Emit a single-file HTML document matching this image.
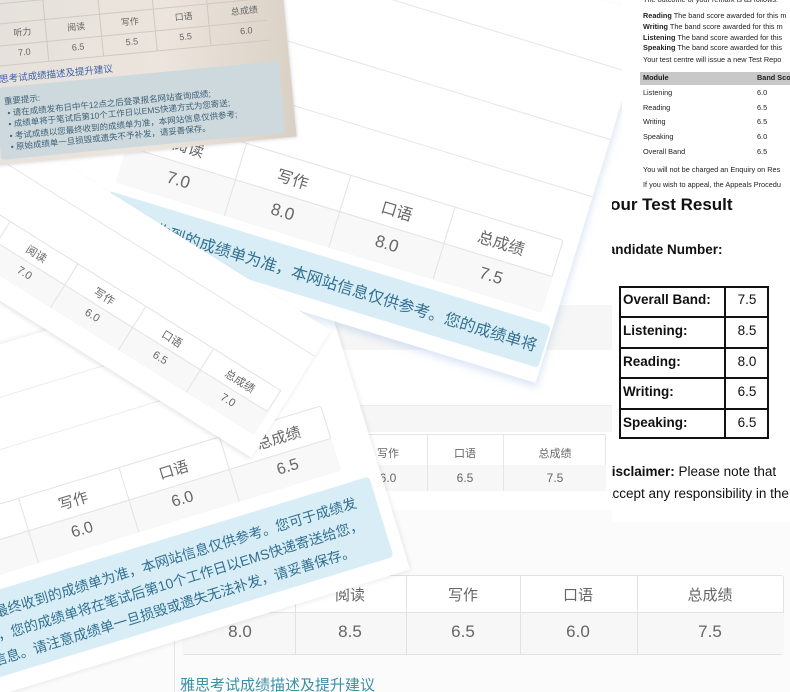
<!DOCTYPE html>
<html><head><meta charset="utf-8"><style>
*{margin:0;padding:0;box-sizing:border-box}
html,body{width:790px;height:692px;overflow:hidden}
body{background:#fff;font-family:"Liberation Sans","Noto Sans CJK SC",sans-serif;color:#666}
#w{position:relative;width:790px;height:692px;overflow:hidden}
.abs{position:absolute}
.rot{position:absolute;transform-origin:0 0}
.c{position:absolute;text-align:center;white-space:nowrap}
.banner{position:absolute;background:#d9edf7;color:#31708f;border-radius:4px}
</style></head><body><div id="w">

<!-- bottom flat card -->
<div class="abs" style="left:0;top:505px;width:790px;height:187px;background:#fbfbfb"></div>
<div class="abs" style="left:174px;top:520px;width:1px;height:172px;background:#e6e6e6"></div>
<div class="abs" style="left:182px;top:575px;width:602px;height:80px;background:#fff;border:1px solid #e2e2e2;border-radius:3px"></div>
<div class="abs" style="left:182px;top:612px;width:602px;height:42px;background:#f7f7f7;border-top:1px solid #e2e2e2"></div>
<div class="abs" style="left:295px;top:575px;width:1px;height:80px;background:#e2e2e2"></div>
<div class="abs" style="left:406px;top:575px;width:1px;height:80px;background:#e2e2e2"></div>
<div class="abs" style="left:520px;top:575px;width:1px;height:80px;background:#e2e2e2"></div>
<div class="abs" style="left:637px;top:575px;width:1px;height:80px;background:#e2e2e2"></div>
<div class="c" style="left:330px;top:584px;width:40px;font-size:15px;color:#666">阅读</div>
<div class="c" style="left:443px;top:584px;width:40px;font-size:15px">写作</div>
<div class="c" style="left:558px;top:584px;width:40px;font-size:15px">口语</div>
<div class="c" style="left:680px;top:584px;width:60px;font-size:15px">总成绩</div>
<div class="c" style="left:220px;top:622px;width:40px;font-size:17px">8.0</div>
<div class="c" style="left:330px;top:622px;width:40px;font-size:17px">8.5</div>
<div class="c" style="left:443px;top:622px;width:40px;font-size:17px">6.5</div>
<div class="c" style="left:558px;top:622px;width:40px;font-size:17px">6.0</div>
<div class="c" style="left:690px;top:622px;width:40px;font-size:17px">7.5</div>
<div class="abs" style="left:180px;top:674px;font-size:15px;color:#3b8fa6;white-space:nowrap">雅思考试成绩描述及提升建议</div>

<!-- middle flat card -->
<div class="abs" style="left:300px;top:300px;width:312px;height:210px;background:#fff"></div>
<div class="abs" style="left:300px;top:305px;width:312px;height:45px;background:#f6f6f6"></div>
<div class="abs" style="left:300px;top:405px;width:312px;height:27px;background:#f6f6f6;border-top:1px solid #ececec"></div>
<div class="abs" style="left:330px;top:434px;width:276px;height:57px;background:#fff;border:1px solid #e6e6e6"></div>
<div class="abs" style="left:330px;top:465px;width:276px;height:26px;background:#f7f7f7"></div>
<div class="abs" style="left:427px;top:434px;width:1px;height:57px;background:#e6e6e6"></div>
<div class="abs" style="left:503px;top:434px;width:1px;height:57px;background:#e6e6e6"></div>
<div class="c" style="left:370px;top:445px;width:36px;font-size:11px">写作</div>
<div class="c" style="left:447px;top:445px;width:36px;font-size:11px">口语</div>
<div class="c" style="left:530px;top:445px;width:50px;font-size:11px">总成绩</div>
<div class="c" style="left:370px;top:471px;width:36px;font-size:12px">6.0</div>
<div class="c" style="left:447px;top:471px;width:36px;font-size:12px">6.5</div>
<div class="c" style="left:537px;top:471px;width:36px;font-size:12px">7.5</div>

<!-- card C (rotated -17) -->
<div class="rot" style="left:73px;top:500px;transform:rotate(-17deg)">
  <div class="abs" style="left:-520px;top:-170px;width:822px;height:335px;background:#fff;box-shadow:0 0 6px rgba(0,0,0,.12)"></div>
  <div class="abs" style="left:-520px;top:-120px;width:780px;height:1px;background:#ececec"></div>
  <div class="abs" style="left:-520px;top:-70px;width:780px;height:1px;background:#ececec"></div>
  <div class="abs" style="left:-260px;top:-18px;width:525px;height:68px;background:#fff;border:1px solid #e3e3e3;border-radius:3px"></div>
  <div class="abs" style="left:-260px;top:16px;width:525px;height:34px;background:#f8f8f8;border-top:1px solid #e3e3e3"></div>
  <div class="abs" style="left:-52px;top:-18px;width:1px;height:68px;background:#e3e3e3"></div>
  <div class="abs" style="left:53px;top:-18px;width:1px;height:68px;background:#e3e3e3"></div>
  <div class="abs" style="left:158px;top:-18px;width:1px;height:68px;background:#e3e3e3"></div>
  <div class="c" style="left:-25px;top:-10px;width:50px;font-size:15px">写作</div>
  <div class="c" style="left:80px;top:-10px;width:50px;font-size:15px">口语</div>
  <div class="c" style="left:180px;top:-10px;width:70px;font-size:15px">总成绩</div>
  <div class="c" style="left:-25px;top:23px;width:50px;font-size:16px">6.0</div>
  <div class="c" style="left:80px;top:23px;width:50px;font-size:16px">6.0</div>
  <div class="c" style="left:190px;top:23px;width:50px;font-size:16px">6.5</div>
  <div class="banner" style="left:-400px;top:64px;width:690px;height:84px"></div>
  <div class="abs" style="left:-420px;top:74px;width:690px;font-size:14px;line-height:23px;color:#31708f;display:flex;flex-direction:column;align-items:flex-end;white-space:nowrap">
    <div>以您最终收到的成绩单为准，本网站信息仅供参考。您可于成绩发</div>
    <div>布成绩，您的成绩单将在笔试后第10个工作日以EMS快递寄送给您，</div>
    <div>考试信息。请注意成绩单一旦损毁或遗失无法补发，请妥善保存。&nbsp;&nbsp;&nbsp;&nbsp;</div>
  </div>
</div>

<!-- card A (rotated 17) -->
<div class="rot" style="left:293px;top:178px;transform:rotate(17deg)">
  <div class="abs" style="left:-420px;top:-260px;width:712px;height:385px;background:#fff;box-shadow:2px 4px 8px rgba(150,180,230,.35)"></div>
  <div class="abs" style="left:-420px;top:-200px;width:712px;height:1px;background:#e6e6e6"></div>
  <div class="abs" style="left:-420px;top:-130px;width:712px;height:1px;background:#e6e6e6"></div>
  <div class="abs" style="left:-420px;top:-70px;width:712px;height:1px;background:#e6e6e6"></div>
  <div class="abs" style="left:-168px;top:-20px;width:445px;height:76px;background:#fff;border:1px solid #e3e3e3;border-radius:3px"></div>
  <div class="abs" style="left:-168px;top:18px;width:445px;height:38px;background:#f8f8f8;border-top:1px solid #e3e3e3"></div>
  <div class="abs" style="left:-55px;top:-20px;width:1px;height:76px;background:#e3e3e3"></div>
  <div class="abs" style="left:54px;top:-20px;width:1px;height:76px;background:#e3e3e3"></div>
  <div class="abs" style="left:163px;top:-20px;width:1px;height:76px;background:#e3e3e3"></div>
  <div class="c" style="left:-134px;top:-12px;width:50px;font-size:16px">阅读</div>
  <div class="c" style="left:-25px;top:-12px;width:50px;font-size:16px">写作</div>
  <div class="c" style="left:84px;top:-12px;width:50px;font-size:16px">口语</div>
  <div class="c" style="left:183px;top:-12px;width:70px;font-size:16px">总成绩</div>
  <div class="c" style="left:-134px;top:26px;width:50px;font-size:17px">7.0</div>
  <div class="c" style="left:-25px;top:26px;width:50px;font-size:17px">8.0</div>
  <div class="c" style="left:84px;top:26px;width:50px;font-size:17px">8.0</div>
  <div class="c" style="left:193px;top:26px;width:50px;font-size:17px">7.5</div>
  <div class="banner" style="left:-170px;top:66px;width:460px;height:44px;border-radius:0 4px 4px 0"></div>
  <div class="abs" style="left:-170px;top:76px;width:452px;font-size:16px;color:#31708f;display:flex;justify-content:flex-end;white-space:nowrap;overflow:hidden"><span>以您最终收到的成绩单为准，本网站信息仅供参考。您的成绩单将</span></div>
</div>

<!-- card B (rotated 32) -->
<div class="rot" style="left:37px;top:253px;transform:rotate(32deg)">
  <div class="abs" style="left:-300px;top:-90px;width:590px;height:150px;background:#fff;box-shadow:0 2px 5px rgba(0,0,0,.1)"></div>
  <div class="abs" style="left:-300px;top:-60px;width:590px;height:1px;background:#e6e6e6"></div>
  <div class="abs" style="left:-120px;top:-13px;width:400px;height:52px;background:#fff;border:1px solid #e3e3e3"></div>
  <div class="abs" style="left:-120px;top:12px;width:400px;height:27px;background:#f8f8f8;border-top:1px solid #e3e3e3"></div>
  <div class="abs" style="left:-40px;top:-13px;width:1px;height:52px;background:#e3e3e3"></div>
  <div class="abs" style="left:40px;top:-13px;width:1px;height:52px;background:#e3e3e3"></div>
  <div class="abs" style="left:120px;top:-13px;width:1px;height:52px;background:#e3e3e3"></div>
  <div class="abs" style="left:200px;top:-13px;width:1px;height:52px;background:#e3e3e3"></div>
  <div class="c" style="left:-20px;top:-7px;width:40px;font-size:11px">阅读</div>
  <div class="c" style="left:60px;top:-7px;width:40px;font-size:11px">写作</div>
  <div class="c" style="left:140px;top:-7px;width:40px;font-size:11px">口语</div>
  <div class="c" style="left:215px;top:-7px;width:50px;font-size:11px">总成绩</div>
  <div class="c" style="left:-20px;top:18px;width:40px;font-size:11px">7.0</div>
  <div class="c" style="left:60px;top:18px;width:40px;font-size:11px">6.0</div>
  <div class="c" style="left:140px;top:18px;width:40px;font-size:11px">6.5</div>
  <div class="c" style="left:220px;top:18px;width:40px;font-size:11px">7.0</div>
</div>

<!-- photo top-left -->
<div class="rot" style="left:0;top:165px;transform:rotate(-5.5deg)">
  <div class="abs" style="left:-20px;top:-200px;width:318px;height:200px;background:linear-gradient(100deg,#e4e0dc,#ece5dd 60%,#d9d0c4);box-shadow:0 0 4px rgba(0,0,0,.2)"></div>
  <div class="abs" style="left:-20px;top:-161px;width:300px;height:1px;background:#cfc9c2"></div>
  <div class="abs" style="left:-20px;top:-141px;width:300px;height:1px;background:#cfc9c2"></div>
  <div class="abs" style="left:-20px;top:-119px;width:300px;height:1px;background:#cfc9c2"></div>
  <div class="abs" style="left:-20px;top:-99px;width:300px;height:1px;background:#cfc9c2"></div>
  <div class="abs" style="left:58px;top:-161px;width:1px;height:62px;background:#cfc9c2"></div>
  <div class="abs" style="left:113px;top:-161px;width:1px;height:62px;background:#cfc9c2"></div>
  <div class="abs" style="left:167px;top:-161px;width:1px;height:62px;background:#cfc9c2"></div>
  <div class="abs" style="left:221px;top:-161px;width:1px;height:62px;background:#cfc9c2"></div>
  <div class="c" style="left:-5px;top:-158px;width:20px;font-size:9px;color:#555">称</div>
  <div class="c" style="left:20px;top:-137px;width:30px;font-size:9px;color:#666">听力</div>
  <div class="c" style="left:74px;top:-137px;width:30px;font-size:9px;color:#666">阅读</div>
  <div class="c" style="left:128px;top:-137px;width:30px;font-size:9px;color:#666">写作</div>
  <div class="c" style="left:182px;top:-137px;width:30px;font-size:9px;color:#666">口语</div>
  <div class="c" style="left:238px;top:-137px;width:40px;font-size:9px;color:#666">总成绩</div>
  <div class="c" style="left:20px;top:-115px;width:30px;font-size:9px;color:#666">7.0</div>
  <div class="c" style="left:74px;top:-115px;width:30px;font-size:9px;color:#666">6.5</div>
  <div class="c" style="left:128px;top:-115px;width:30px;font-size:9px;color:#666">5.5</div>
  <div class="c" style="left:182px;top:-115px;width:30px;font-size:9px;color:#666">5.5</div>
  <div class="c" style="left:243px;top:-115px;width:30px;font-size:9px;color:#666">6.0</div>
  <div class="abs" style="left:-2px;top:-93px;font-size:9.5px;color:#3f62a8;white-space:nowrap">雅思考试成绩描述及提升建议</div>
  <div class="abs" style="left:2px;top:-77px;width:285px;height:72px;background:#cdd9dc;border-radius:3px"></div>
  <div class="abs" style="left:10px;top:-68px;font-size:8.5px;line-height:11.5px;color:#3f6178;white-space:nowrap">重要提示:<br>&nbsp;• 请在成绩发布日中午12点之后登录报名网站查询成绩;<br>&nbsp;• 成绩单将于笔试后第10个工作日以EMS快递方式为您寄送;<br>&nbsp;• 考试成绩以您最终收到的成绩单为准，本网站信息仅供参考;<br>&nbsp;• 原始成绩单一旦损毁或遗失不予补发，请妥善保存。</div>
</div>

<!-- right document top -->
<div class="abs" style="left:622px;top:0;width:168px;height:192px;background:#fff;overflow:hidden;font-size:7.3px;color:#222;line-height:10.5px;white-space:nowrap">
  <div class="abs" style="left:21px;top:-5px">The outcome of your remark is as follows.</div>
  <div class="abs" style="left:21px;top:11px"><b>Reading</b> The band score awarded for this m</div>
  <div class="abs" style="left:21px;top:22px"><b>Writing</b> The band score awarded for this m</div>
  <div class="abs" style="left:21px;top:33px"><b>Listening</b> The band score awarded for this</div>
  <div class="abs" style="left:21px;top:43px"><b>Speaking</b> The band score awarded for this</div>
  <div class="abs" style="left:21px;top:55px">Your test centre will issue a new Test Repo</div>
  <div class="abs" style="left:18px;top:72px;width:150px;height:13px;background:#c8c8c8"></div>
  <div class="abs" style="left:21px;top:73px"><b>Module</b></div>
  <div class="abs" style="left:135px;top:73px"><b>Band Sco</b></div>
  <div class="abs" style="left:21px;top:88px">Listening</div><div class="abs" style="left:135px;top:88px">6.0</div>
  <div class="abs" style="left:21px;top:103px">Reading</div><div class="abs" style="left:135px;top:103px">6.5</div>
  <div class="abs" style="left:21px;top:117px">Writing</div><div class="abs" style="left:135px;top:117px">6.5</div>
  <div class="abs" style="left:21px;top:132px">Speaking</div><div class="abs" style="left:135px;top:132px">6.0</div>
  <div class="abs" style="left:21px;top:147px">Overall Band</div><div class="abs" style="left:135px;top:147px">6.5</div>
  <div class="abs" style="left:21px;top:165px">You will not be charged an Enquiry on Res</div>
  <div class="abs" style="left:21px;top:180px">If you wish to appeal, the Appeals Procedu</div>
</div>

<!-- Your Test Result -->
<div class="abs" style="left:612px;top:192px;width:178px;height:330px;background:#fff;overflow:hidden;color:#111;white-space:nowrap">
  <div class="abs" style="left:-12px;top:3px;font-size:17px;font-weight:bold">Your Test Result</div>
  <div class="abs" style="left:-14px;top:50px;font-size:13.5px;font-weight:bold">Candidate Number:</div>
  <div class="abs" style="left:7px;top:94px;width:150px;height:153px;border:2px solid #111"></div>
  <div class="abs" style="left:112px;top:94px;width:2px;height:153px;background:#111"></div>
  <div class="abs" style="left:7px;top:124px;width:150px;height:2px;background:#111"></div>
  <div class="abs" style="left:7px;top:155px;width:150px;height:2px;background:#111"></div>
  <div class="abs" style="left:7px;top:185px;width:150px;height:2px;background:#111"></div>
  <div class="abs" style="left:7px;top:216px;width:150px;height:2px;background:#111"></div>
  <div class="abs" style="left:11px;top:100px;font-size:13.5px;font-weight:bold">Overall Band:</div>
  <div class="abs" style="left:11px;top:131px;font-size:13.5px;font-weight:bold">Listening:</div>
  <div class="abs" style="left:11px;top:162px;font-size:13.5px;font-weight:bold">Reading:</div>
  <div class="abs" style="left:11px;top:192px;font-size:13.5px;font-weight:bold">Writing:</div>
  <div class="abs" style="left:11px;top:223px;font-size:13.5px;font-weight:bold">Speaking:</div>
  <div class="c" style="left:114px;top:100px;width:42px;font-size:13.5px">7.5</div>
  <div class="c" style="left:114px;top:131px;width:42px;font-size:13.5px">8.5</div>
  <div class="c" style="left:114px;top:162px;width:42px;font-size:13.5px">8.0</div>
  <div class="c" style="left:114px;top:192px;width:42px;font-size:13.5px">6.5</div>
  <div class="c" style="left:114px;top:223px;width:42px;font-size:13.5px">6.5</div>
  <div class="abs" style="left:-10px;top:272px;font-size:13.5px"><b>Disclaimer:</b> Please note that</div>
  <div class="abs" style="left:-7px;top:294px;font-size:13.5px">accept any responsibility in the</div>
</div>
</div></body></html>
